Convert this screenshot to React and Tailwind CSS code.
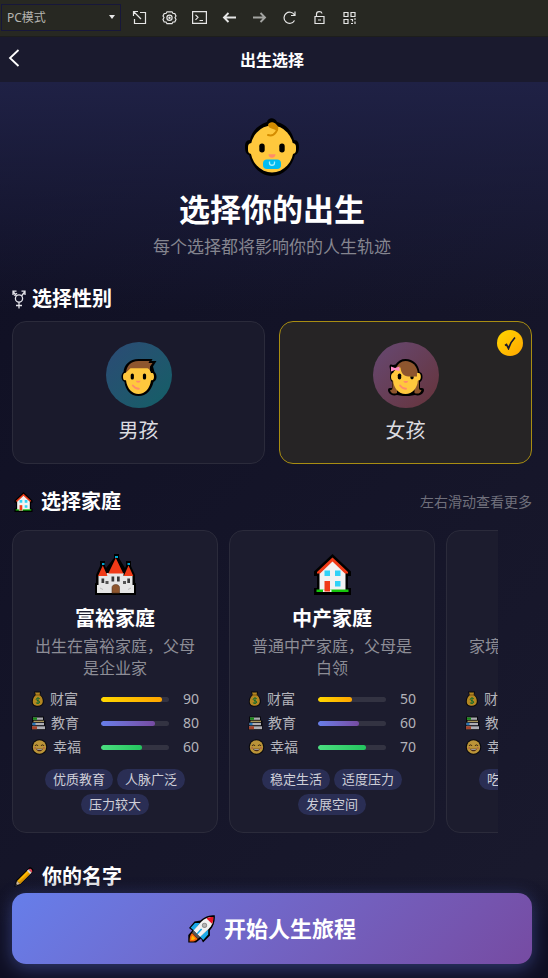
import React, { useState } from "react";

function BabyIcon({ className }) {
    return (
        <svg viewBox="0 0 54 58" className={className} aria-hidden="true">
            <path d="M22 4c1-5 8-5 10 0 9 2 15 9 17 18 4 0 5 3 5 7s-1 7-4 8c-3 12-12 21-23 21S7 49 4 37c-3-1-4-4-4-8s1-7 5-7c2-9 8-15 17-18z" fill="#000" />
            <rect x="3" y="25" width="48" height="11" rx="4" fill="#ffc83d" />
            <ellipse cx="27" cy="31" rx="21.5" ry="23.5" fill="#ffc83d" />
            <path d="M26 6c5-1 8 4 5 8-2 3-5 4-8 3" fill="none" stroke="#d48c00" strokeWidth="2" strokeLinecap="round" />
            <path d="M23 7c1-4 8-4 9 2l1 4-5-2c-3-1-5-2-5-4z" fill="#d48c00" />
            <rect x="14.3" y="25.5" width="5.4" height="9" rx="2.7" fill="#000" />
            <rect x="34.3" y="25.5" width="5.4" height="9" rx="2.7" fill="#000" />
            <path d="M23.5 36.3h7c0 4.700-7 4.700-7 0z" fill="#ff8c69" />
            <rect x="18" y="41.5" width="18" height="9.5" rx="4" fill="#00bcf2" />
            <path d="M24.500 43.500v1.500c0 3 5 3 5 0v-1.500" fill="none" stroke="#a6eeff" strokeWidth="1.3" />
        </svg>
    );
}

function BoyIcon({ className }) {
    return (
        <svg viewBox="0 0 35 37" className={className} aria-hidden="true">
            <path d="M17 0h14l-1 2h5l-3.500 5.500L33 13c1.500 1 2 3 2 5s-1 4-3 5c-2 8-7 14-15 14S4 31 3 23c-2-1-3-3-3-5s.5-4 2-5C2.500 6 8 0 17 0z" fill="#000" />
            <path d="M4.500 14C5 7 9 2 17 2h11l-1 2h4l-2.500 3.500V14z" fill="#8e562e" />
            <path d="M9 9.300h17c2 1 3 2.500 3.500 4.700h1.300c1 0 1.700 1.500 1.700 3.700s-.7 3.600-2 3.600h-1C28.500 29.500 23.500 35 17 35S5.500 29.500 4.500 21.300h-1c-1.300 0-2-1.300-2-3.600S2.200 14 3.500 14l1-.5z" fill="#ffc83d" />
            <rect x="9.200" y="14.500" width="3.200" height="6" rx="1.600" fill="#000" />
            <rect x="21.400" y="14.500" width="3.200" height="6" rx="1.600" fill="#000" />
            <path d="M14.500 21.800H19c0 2.500-4.500 2.500-4.500 0z" fill="#ff8c69" />
            <path d="M11.300 26.500c1.500 2 3.500 3.300 6 3.300" fill="none" stroke="#ff8c69" strokeWidth="1.900" strokeLinecap="round" />
        </svg>
    );
}

function GirlIcon({ className }) {
    return (
        <svg viewBox="0 0 36 37" className={className} aria-hidden="true">
            <path d="M17.500 0c8 0 13 5.500 14 13 2.500.5 3 2.500 3 5s-1 4-2.500 5v6h2c2 0 2.500 2 1.500 4-1.500 3-5 4-8.500 3-6 1.500-12 1.500-18 0-3.500 1-7 0-8.500-3-1-2-.5-4 1.500-4h2v-6c-1-1-2-3-2-5l.5-5-1-5.500C1.500 5 3.500 5 5 6l2.500-.5C10 2 13 0 17.500 0z" fill="#000" />
            <path d="M4.500 20l4.500 8v6c-3 1.200-6 .7-7-3 2.300.2 2.500-1 2.500-3zM31 20l-4.500 8v6c3 1.200 6 .7 7-3-2.300.2-2.500-1-2.500-3z" fill="#8e562e" />
            <path d="M8 9c2-4 5-7 9.500-7C24 2 29 7 29.800 13.500L30 18H8z" fill="#8e562e" />
            <path d="M12.500 8.500c.5 5.500 3 8.500 8 9h8.500V14h1.500c1.500 0 2.300 1.500 2.300 3.800s-.8 3.700-2.300 3.700H30C29 29.500 24.500 35 17.500 35S6 29.500 5 21.500c-1.300 0-2-1.500-2-3.700S4 14 5 14c1-2.500 4-5 7.500-5.500z" fill="#ffc83d" />
            <path d="M3 7.500L7 9l4.500-1.500v4.500L7 11l-4 1.500z" fill="#ff8dc6" />
            <rect x="9.800" y="14.500" width="3.400" height="6" rx="1.700" fill="#000" />
            <path d="M22.300 17.500h3.400c.3 3.800-3.700 3.800-3.400 0z" fill="#000" />
            <path d="M15.500 22H20c0 2.500-4.500 2.500-4.500 0z" fill="#ff8c69" />
            <path d="M12 26.500c1.500 2 3.500 3.300 6 3.300" fill="none" stroke="#ff8c69" strokeWidth="1.900" strokeLinecap="round" />
        </svg>
    );
}

function CastleIcon({ className }) {
    return (
        <svg viewBox="0 0 41 41" className={className} aria-hidden="true">
            <path d="M19 0h5v4l6 10 1-2V7h5v5l4 9v8h1v12H0V29h1v-8l4-9V7h5v5l1 2 8-10z" fill="#000" />
            <path d="M3.500 22h8v-3h17v3h9v9H39v8H2v-8h1.500z" fill="#e6e6e6" />
            <path d="M20.800 4l7.500 15.500h-15zM7.800 11.500l4.700 10.500H3zM33.500 11.500L38.300 22h-9.500z" fill="#f03a17" />
            <path d="M20 2h3v2h-3zM7 9h2.500v2H7zM32.500 9H35v2h-2.500z" fill="#00a5d0" />
            <path d="M10.500 27h3v3h-3zM28 27h3v3h-3z" fill="#555" />
            <path d="M6.500 24.500h2.700V29H6.500zM16.500 22.500h2.700v5h-2.700zM22 22.500h2.700v5H22zM32.300 24.500H35V29h-2.700z" fill="#383838" />
            <path d="M17 39v-5.500c0-4 7.500-4 7.500 0V39z" fill="#8e562e" stroke="#5b3a22" strokeWidth=".6" />
            <path d="M5 34l3 1.500M36 34l-3 1.500" stroke="#bdbdbd" />
        </svg>
    );
}

function HouseIcon({ className }) {
    return (
        <svg viewBox="0 0 37 41" className={className} aria-hidden="true">
            <path d="M18.500 0L0 17.500V22h3v12H0v7h37v-7h-3V22h3v-4.500z" fill="#000" />
            <path d="M18.500 6L5.500 19v18h26V19z" fill="#f2f2f2" />
            <path d="M18.500 3.500L3 18v1.500h3L18.500 7.500 31 19.500h3V18z" fill="#f03a17" />
            <path d="M2.500 35.500h32V38h-32z" fill="#16c60c" />
            <path d="M10.500 16.500H16V22h-5.500zM21 16.500h5.500V22H21zM21 27h5.500v5.500H21z" fill="#31d2f7" />
            <path d="M9 35.500h8.500V38H9z" fill="#f2f2f2" />
            <path d="M10.500 27H16v10.500h-5.500z" fill="#f03a17" />
        </svg>
    );
}

function MoneyIcon({ className }) {
    return (
        <svg viewBox="0 0 14 16" className={className} aria-hidden="true">
            <path d="M3 .5h7L9.500 4C12 5.500 13 8.500 12.800 11c-.3 3-2.800 4.700-6 4.700S1 14.500.8 11C.7 8 1.800 5.500 4 4z" fill="#000" />
            <path d="M4 1.500h5L8.500 4c2.300 1.300 3.500 4 3.300 6.800-.2 2.700-2.300 4-5 4s-4.900-1-5-4C1.700 8 3 5.300 5 4z" fill="#f5b51c" />
            <path d="M4.300 3.500h5v1h-5z" fill="#a56a00" />
            <path d="M8.800 7.700C7.500 6.800 5 7 5.200 8.500c.2 1.500 3.500.8 3.500 2.600 0 1.600-2.600 1.600-3.800.6M7 6.300v6.600" fill="none" stroke="#0f8a2e" />
        </svg>
    );
}

function BooksIcon({ className }) {
    return (
        <svg viewBox="0 0 15 16" className={className} aria-hidden="true">
            <path d="M1 1.500h12v4h1.500V15H.5v-5L1 6z" fill="#000" />
            <path d="M2 2.500h10v2.300H2z" fill="#e8e8e8" />
            <path d="M2 2.500h4v2.300H2z" fill="#16b60c" />
            <path d="M2.500 5.700H13v1.200H2.500z" fill="#ffe27a" />
            <path d="M1.500 7.800H13v2.400H1.500z" fill="#eee" />
            <path d="M1.500 7.800h3v2.400h-3z" fill="#2a9df4" />
            <path d="M1 11.300h13v2.900H1z" fill="#eee" />
            <path d="M1 11.300h5v2.900H1z" fill="#e0552b" />
        </svg>
    );
}

function SmileIcon({ className }) {
    return (
        <svg viewBox="0 0 16 16" className={className} aria-hidden="true">
            <circle cx="8" cy="8" r="7.8" fill="#000" />
            <circle cx="8" cy="8" r="6.7" fill="#ffc83d" />
            <path d="M3.500 7c.6-1.500 2.400-1.500 3 0M9.500 7c.6-1.500 2.400-1.500 3 0" fill="none" stroke="#3a2200" />
            <path d="M4.500 9.800c1.500 3.400 5.500 3.400 7 0z" fill="#5a2e12" />
            <path d="M5.300 10.200h5.400l-.7.9H6z" fill="#fff" />
            <circle cx="3.600" cy="9" r="1" fill="#f5884e" />
            <circle cx="12.400" cy="9" r="1" fill="#f5884e" />
        </svg>
    );
}

function PencilIcon({ className }) {
    return (
        <svg viewBox="0 0 20 20" className={className} aria-hidden="true">
            <path d="M15 .8c1-.8 2.200-.5 3.300.6s1.500 2.300.7 3.400L6 18 .4 19.800 2 13.500z" fill="#000" />
            <path d="M3 14L13.500 3.500l3 3L6 17z" fill="#ffb900" />
            <path d="M4.700 15.500L15 5l1.500 1.500L6 17z" fill="#e39a00" />
            <path d="M13 3.800l1.500-1.500 3.200 3.200L16.200 7z" fill="#d8d8d8" />
            <path d="M14.600 2.200c1.800-1.800 4.900 1.300 3.200 3.200z" fill="#e8455a" />
            <path d="M3 14l3 3-4.300 1.400z" fill="#e8cfae" />
            <path d="M2.200 16.600l1.300 1.300-2 .7z" fill="#444" />
        </svg>
    );
}

function RocketIcon({ className }) {
    return (
        <svg viewBox="0 0 27 28" className={className} aria-hidden="true">
            <path d="M26.800.3c.4 5.700-1 10.700-5 15.200l.2 5-7 7-2-4-5 4H.3V20l4-4.500L1 13l5.500-6.500 6-1C17 1.500 21.500.3 26.800.3z" fill="#000" />
            <path d="M6 15.500L2.700 12.800 7 8h5zM12 21.500l3.200 3.500 5-5.500v-5z" fill="#1ba9e8" />
            <path d="M25.200 2c.3 4.500-1 8.500-4.500 12L12 22l-6.500-6.500L13 7c3.500-3.700 7.500-5.200 12.200-5z" fill="#f2f2f2" />
            <path d="M25.200 2c.2 2.500-.2 4.700-1.200 6.800L18.500 3.500c2-1.100 4.200-1.600 6.700-1.500z" fill="#e81224" />
            <circle cx="16.500" cy="10.300" r="2.600" fill="#8a8a8a" />
            <circle cx="16.500" cy="10.300" r="1.700" fill="#b5b5b5" />
            <path d="M8.500 18.500l4.500-5 1.200 1-4.700 5z" fill="#1ba9e8" />
            <path d="M5.500 15.500l6.500 6.500-2 1.800-6-6z" fill="#555" />
            <path d="M4 18l5.700 5.700C8 26.500 5 26.500 1.600 26.500c0-3.500.2-6.500 2.400-8.500z" fill="#f7630c" />
            <path d="M4.500 20.500l3 3c-1.200 1.200-2.700 1.500-4.300 1.500 0-1.700.2-3.200 1.300-4.500z" fill="#ffb900" />
        </svg>
    );
}

function GenderIcon({ className }) {
    return (
        <svg viewBox="0 0 14 19" className={className} fill="none" stroke="#e4e4ea" strokeWidth="1.300" aria-hidden="true">
            <circle cx="7" cy="8.500" r="3.600" />
            <path d="M4.500 6L1 1.500M1 5V1.200h3.500M2 5.500l3-2.300M9.500 6L13 1.500M9.500 1.200H13V5M7 12v6.500M4 15.500h6" />
        </svg>
    );
}

const toolbarIcons = [
    { name: "打开窗口", path: <path d="M6 1.500H1.500V6M2 2l7 7M8 2.500h5.500v11h-11V9" /> },
    {
        name: "设置",
        path: (
            <>
                <path d="M5 1.800h5l1 1.700h1.800L14 6l-1 1.500 1 2-1.200 2.500H11l-1 1.700H5l-1-1.700H2.200L1 9.500l1-2L1 6l1.200-2.500H4z" />
                <circle cx="7.500" cy="7.700" r="2.600" />
                <circle cx="7.500" cy="7.700" r=".6" />
            </>
        ),
    },
    { name: "控制台", path: <path d="M.6 1.600h13.800v11.800H.6zM3.500 4.800L6 7.300 3.500 9.800M7.500 10.500H11" /> },
    { name: "后退", path: <path d="M14 7.500H2M6.500 3L2 7.500 6.500 12" strokeWidth="1.900" /> },
    { name: "前进", path: <path d="M1 7.500h12M8.500 3L13 7.500 8.500 12" strokeWidth="1.900" opacity=".65" /> },
    { name: "刷新", path: <path d="M12.500 5A5.600 5.600 0 1 0 12.500 10.500M13 1.500V5.500H9" /> },
    { name: "解锁", path: <path d="M3 6.500h9v7H3zM4.500 6.500V4c0-3 5-3 5.500-.5M6 10h3" /> },
    { name: "二维码", path: <path d="M2 2.500h4v4H2zM9 2.500h4v4H9zM2 9.500h4v4H2zM8.500 9.500h2v2M12 9h2M13 11.500v2.500M9 13.500h2" /> },
];

const genders = [
    { id: "boy", label: "男孩", Icon: BoyIcon, circle: "bg-linear-135 from-[#2b4a75] to-[#115f66]" },
    { id: "girl", label: "女孩", Icon: GirlIcon, circle: "bg-linear-135 from-[#664873] to-[#66333a]" },
];

const statTypes = [
    { key: "wealth", label: "财富", Icon: MoneyIcon, size: "w-[14px]", bar: "from-[#ffd700] to-[#ffa500]" },
    { key: "education", label: "教育", Icon: BooksIcon, size: "w-[15px]", bar: "from-[#667eea] to-[#764ba2]" },
    { key: "happiness", label: "幸福", Icon: SmileIcon, size: "w-[17px]", bar: "from-[#4ade80] to-[#22c55e]" },
];

const families = [
    {
        name: "富裕家庭",
        desc: "出生在富裕家庭，父母是企业家",
        Icon: CastleIcon,
        stats: { wealth: 90, education: 80, happiness: 60 },
        tags: ["优质教育", "人脉广泛", "压力较大"],
    },
    {
        name: "中产家庭",
        desc: "普通中产家庭，父母是白领",
        Icon: HouseIcon,
        stats: { wealth: 50, education: 60, happiness: 70 },
        tags: ["稳定生活", "适度压力", "发展空间"],
    },
    {
        name: "贫困家庭",
        desc: "家境较为贫寒，需要努力",
        Icon: HouseIcon,
        stats: { wealth: 20, education: 40, happiness: 50 },
        tags: ["吃苦耐劳", "资源有限", "逆袭潜力"],
    },
];

function Toolbar() {
    return (
        <div className="h-[37px] shrink-0 flex items-center bg-[#272822] border-b border-[#1d1e1c] pl-px pb-[2px]">
            <div className="relative w-[120px] h-[27px]">
                <select
                    aria-label="设备模式"
                    className="w-full h-full appearance-none bg-[#272822] border border-[#17173a] pl-[5px] text-xs text-[#b5b5b0]"
                >
                    <option>PC模式</option>
                </select>
                <svg viewBox="0 0 6 4" className="absolute right-[6px] top-[11px] w-[6px] h-1 pointer-events-none" aria-hidden="true">
                    <path d="M0 0h6L3 4z" fill="#e8e8e8" />
                </svg>
            </div>
            <div className="ml-[11px] flex items-center gap-[15px]">
                {toolbarIcons.map(({ name, path }) => (
                    <button key={name} type="button" aria-label={name} className="w-[15px] h-[15px]">
                        <svg viewBox="0 0 15 15" className="w-[15px] h-[15px]" fill="none" stroke="#e6e6e6" strokeWidth="1.200">
                            {path}
                        </svg>
                    </button>
                ))}
            </div>
        </div>
    );
}

function SectionTitle({ icon, children }) {
    return (
        <h2 className="flex items-center gap-[6px] text-xl leading-7 font-bold text-white">
            {icon}
            {children}
        </h2>
    );
}

function GenderCard({ gender, selected, onSelect }) {
    const { label, Icon, circle } = gender;

    return (
        <button
            type="button"
            aria-pressed={selected}
            onClick={onSelect}
            className={`relative flex flex-col items-center rounded-[14px] border pt-5 pb-[18px] ${
                selected ? "bg-[#262425] border-[#a88d12]" : "bg-[#1a1a2c] border-[#2b2b3b]"
            }`}
        >
            <span className={`w-[66px] h-[66px] rounded-full flex items-center justify-center pt-1 ${circle}`}>
                <Icon className="w-9 h-[37px]" />
            </span>
            <span className="mt-[9px] text-xl leading-7 text-[#dcdce0]">{label}</span>
            {selected && (
                <span className="absolute top-2 right-2 w-[26px] h-[26px] rounded-full flex items-center justify-center bg-linear-135 from-[#ffd700] to-[#ffa500]">
                    <svg viewBox="0 0 12 14" className="w-3 h-[14px]" fill="none" stroke="#1a1a2e" aria-hidden="true">
                        <path d="M1 9.500l1.500-1 2 4C6 8 8.500 4 11 1.500" strokeWidth="1.700" />
                    </svg>
                </span>
            )}
        </button>
    );
}

function FamilyCard({ family }) {
    const { name, desc, Icon, stats, tags } = family;

    return (
        <article className="w-[206px] shrink-0 flex flex-col items-center rounded-[14px] border border-[#2b2b3b] bg-[#1c1c2e] px-[18px] pt-[23px] pb-[17px]">
            <Icon className="h-[41px] w-[41px]" />
            <h3 className="mt-[10px] text-xl leading-7 font-bold text-white">{name}</h3>
            <p className="mt-[2px] text-base leading-[22px] text-center text-[#8d8d96]">{desc}</p>

            <div className="mt-2 w-full">
                {statTypes.map(({ key, label, Icon: StatIcon, size, bar }) => (
                    <div key={key} className="h-6 flex items-center text-sm text-[#b3b3ba]">
                        <span className="w-[70px] shrink-0 flex items-center gap-[5px]">
                            <StatIcon className={`h-4 shrink-0 opacity-70 ${size}`} />
                            {label}
                        </span>
                        <span className="flex-1 h-[5px] rounded-full overflow-hidden bg-[#333342]">
                            <span
                                className={`block h-full rounded-full bg-linear-to-r ${bar}`}
                                style={{ width: `${stats[key]}%` }}
                            />
                        </span>
                        <span className="w-[30px] text-right">{stats[key]}</span>
                    </div>
                ))}
            </div>

            <div className="mt-[10px] w-full flex flex-wrap justify-center gap-1">
                {tags.map((tag) => (
                    <span key={tag} className="h-[21px] px-2 rounded-full bg-[#2a2e54] text-[13px] leading-[21px] text-[#cfcfd8]">
                        {tag}
                    </span>
                ))}
            </div>
        </article>
    );
}

export default function App() {
    const [gender, setGender] = useState("girl");

    return (
        <div className="relative h-screen flex flex-col overflow-hidden bg-[#121225] font-['Noto_Sans','Noto_Sans_CJK_SC',sans-serif]">
            <Toolbar />

            <header className="h-[45px] shrink-0 grid grid-cols-[28px_1fr_32px] items-center bg-[#1a1a2e]">
                <button type="button" aria-label="返回" className="pl-2 pb-1">
                    <svg viewBox="0 0 12 18" className="w-3 h-[18px]" fill="none" stroke="#fff" strokeWidth="1.800">
                        <path d="M10.500 1L2 9l8.500 8" />
                    </svg>
                </button>
                <h1 className="text-center text-base font-bold text-white">出生选择</h1>
            </header>

            <main className="flex-1 min-h-0 overflow-y-auto [scrollbar-width:none] bg-linear-135 from-[#0f0f23] to-[#1a1a2e]">
                <div className="pl-3 pr-4 pb-24 bg-linear-to-b from-[#1f2145] to-transparent bg-no-repeat bg-[length:100%_230px]">
                    <div className="pt-9 flex flex-col items-center text-center">
                        <BabyIcon className="w-[54px] h-[58px]" />
                        <h2 className="mt-[13px] text-[31px] leading-10 font-bold text-white">选择你的出生</h2>
                        <p className="mt-[6px] text-[17px] leading-6 text-[#85858f]">每个选择都将影响你的人生轨迹</p>
                    </div>

                    <section className="mt-[26px]">
                        <SectionTitle icon={<GenderIcon className="w-[14px] h-[19px]" />}>选择性别</SectionTitle>
                        <div className="mt-2 grid grid-cols-2 gap-[14px]">
                            {genders.map((item) => (
                                <GenderCard
                                    key={item.id}
                                    gender={item}
                                    selected={gender === item.id}
                                    onSelect={() => setGender(item.id)}
                                />
                            ))}
                        </div>
                    </section>

                    <section className="mt-6">
                        <div className="flex items-center justify-between">
                            <SectionTitle icon={<HouseIcon className="w-[23px] h-5" />}>选择家庭</SectionTitle>
                            <span className="text-sm text-[#70707c]">左右滑动查看更多</span>
                        </div>
                        <div className="mt-[14px] mr-[34px] flex gap-[11px] overflow-x-auto [scrollbar-width:none]">
                            {families.map((family) => (
                                <FamilyCard key={family.name} family={family} />
                            ))}
                        </div>
                    </section>

                    <section className="mt-[30px]">
                        <SectionTitle icon={<PencilIcon className="w-6 h-5" />}>你的名字</SectionTitle>
                    </section>
                </div>
            </main>

            {/* stays above the scrolling content */}
            <footer className="absolute inset-x-0 bottom-0 pl-3 pr-4 pt-4 pb-[14px] bg-linear-to-t from-[#0f0f23] from-50% to-transparent">
                <button
                    type="button"
                    className="w-full h-[71px] rounded-[14px] flex items-center justify-center gap-[9px] bg-linear-135 from-[#667eea] to-[#764ba2] text-[22px] font-bold text-white shadow-[0_4px_18px_rgba(102,126,234,0.4)]"
                >
                    <RocketIcon className="w-[27px] h-7" />
                    开始人生旅程
                </button>
            </footer>
        </div>
    );
}
